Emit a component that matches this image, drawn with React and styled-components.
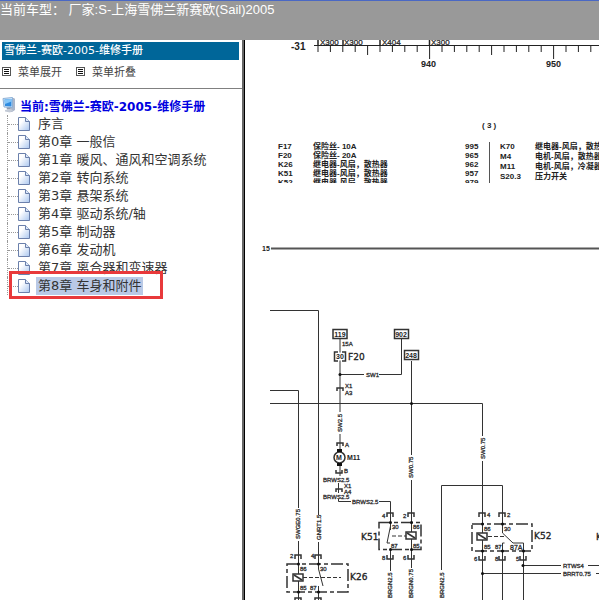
import React from 'react'
import styled, { createGlobalStyle } from 'styled-components';

const chapters = [
    '序言',
    '第0章 一般信',
    '第1章 暖风、通风和空调系统',
    '第2章 转向系统',
    '第3章 悬架系统',
    '第4章 驱动系统/轴',
    '第5章 制动器',
    '第6章 发动机',
    '第7章 离合器和变速器',
    '第8章 车身和附件',
];

const legendLeft = [
    ['F17', '保险丝- 10A', '995'],
    ['F20', '保险丝- 20A', '965'],
    ['K26', '继电器-风扇，散热器', '962'],
    ['K51', '继电器-风扇，散热器', '957'],
    ['K52', '继电器-风扇，散热器', '979'],
];

const legendRight = [
    ['K70', '继电器-风扇，散热器'],
    ['M4', '电机-风扇，散热器'],
    ['M11', '电机-风扇，冷凝器'],
    ['S20.3', '压力开关'],
];

const ListIcon = () => (
    <svg width="9" height="9" viewBox="0 0 9 9" shapeRendering="crispEdges" aria-hidden="true">
        <rect x="0.5" y="0.5" width="8" height="8" fill="#fff" stroke="#555" />
        <path d="M2 2.5h5M2 4.5h5M2 6.5h5" stroke="#111" />
    </svg>
)

const ComputerIcon = () => (
    <svg width="14" height="16" viewBox="0 0 14 16" aria-hidden="true">
        <path d="M9 1h3l1 1v11l-3 2H8z" fill="#aab6ca" />
        <path d="M1 1.500L10.500.5v10L2 10z" fill="#d3e6f8" stroke="#8db0d6" />
        <path d="M2.500 2.500L9.500 2v7.500L3 9z" fill="#2f8be0" />
        <path d="M2.500 2.500L9.500 2v2.500L3 7z" fill="#85c6f8" />
        <path d="M4.500 10.500h4v2H5z" fill="#8f9bb0" />
        <path d="M3 13l6-1 2 1.500-3 2-5-1z" fill="#c3cad6" />
    </svg>
)

const PageIcon = () => (
    <svg width="12" height="14" viewBox="0 0 12 14" aria-hidden="true">
        <defs>
            <linearGradient id="sheet" x1="0" y1="0" x2="1" y2="1">
                <stop offset="0.3" stopColor="#fff" />
                <stop offset="1" stopColor="#a9c6ef" />
            </linearGradient>
        </defs>
        <path d="M.5.5h7l4 4v9H.5z" fill="url(#sheet)" stroke="#6b80ab" />
        <path d="M7.500.5v4h4" fill="#dce8fa" stroke="#6b80ab" />
    </svg>
)

const Ruler = () => {
    const ticks = [];
    for (let i = 0; i < 23; i++) {
        ticks.push(318 + i * 12.4);
    }
    return (
        <Drawing width="354" height="80" viewBox="245 40 354 80" aria-label="-31">
            <path d="M314 45.500H599" stroke="#222" />
            {ticks.map((x, i) => (
                <path key={x} d={`M${x} 45v${i % 10 === 9 ? 14 : i % 5 === 4 ? 10 : 7}`} stroke="#222" />
            ))}
            <path d="M318 40v6M343 40v6M380 40v6M429.500 40v6" stroke="#222" strokeWidth="1.500" />
            <text x="291" y="50" fontSize="10">-31</text>
            <Wire fontSize="8">
                <text x="320" y="45">X300</text>
                <text x="344" y="45">X300</text>
                <text x="382" y="45">X404</text>
                <text x="431" y="45">X300</text>
            </Wire>
            <text x="421" y="67" fontSize="9">940</text>
            <text x="546" y="67" fontSize="9">950</text>
        </Drawing>
    )
}

const Coil = ({ x, y }) => (
    <g strokeWidth="1.500">
        <rect x={x - 5} y={y - 3} width="10" height="7" fill="#fff" />
        <path d={`M${x - 4} ${y - 2}l8 5`} />
    </g>
)

const Circuit = () => (
    <Drawing width="354" height="370" viewBox="245 230 354 370" aria-label="F20 M11 K26 K51 K52">
        <g fill="none" stroke="#333" strokeWidth="1">
            <path d="M271 248.500H599" strokeWidth="2" stroke="#555" />
            <path d="M270 310.500H318.500V515M318.500 542V569M318.500 586V600" />
            <path d="M270 390.500H298.500V508M298.500 541V600" />
            <path d="M270 403.500H482.500V436M482.500 461V600" />
            <path d="M340 339V412M340 434V476M401.500 339V374.500H379M340 374.500H364" />
            <path d="M411.500 361V455M411.500 480V566" />
            <path d="M338.500 483v10M338.500 499v2.500H351M379 501.500H390.500V530" />
            <path d="M390.500 526L387 543M387 543h3M390.500 549V571M411.500 550V568" />
            <path d="M441.500 570V485.500H502.500V533L513 543H523.500V600M502.500 543h2M502.500 543V600" />
            <path d="M523 565.500H561M588 565.500H599M482 573.500H561M596 573.500H599" />
            <path d="M318.500 569L323 586" />
            <path d="M337 391v-3h6v3M337 446v-3h6v3M336 470v3h6v-3M336 492v-3h6v3" strokeWidth="1.500" />
            <path d="M387 517v-4h6v4M408 517v-4h6v4M387 555v4h6v-4M408 555v4h6v-4" strokeWidth="1.500" />
            <path d="M295 559v-4h6v4M315 559v-4h6v4M295 600v-2h6v2M315 600v-2h6v2" strokeWidth="1.500" />
            <path d="M479 517v-4h6v4M499 517v-4h6v4M479 556v4h6v-4M499 556v4h6v-4M520 556v4h6v-4" strokeWidth="1.500" />
            <g strokeDasharray="12 3 4 3" strokeWidth="1.500">
                <rect x="379" y="522.500" width="42" height="27" />
                <rect x="287" y="564" width="61" height="28" />
                <rect x="472" y="524" width="60" height="27" />
            </g>
            <path d="M392 536h14M303 577.500h38M488 536.500h17" strokeDasharray="4 2" />
            <g fill="#fff" strokeWidth="1.500">
                <rect x="333" y="329.500" width="14" height="9" />
                <rect x="394.500" y="329.500" width="14" height="9" />
                <rect x="404.500" y="350.500" width="14" height="9" />
            </g>
            <path d="M334 352.500h11v8h-11z" fill="#fff" stroke="none" />
            <path d="M338 352h-3.500v9h3.500M342 352h3.500v9h-3.500" strokeWidth="1.500" />
            <Coil x={298} y={577} />
            <Coil x={411} y={535} />
            <Coil x={482} y={536} />
            <circle cx="339.500" cy="457.500" r="5.500" fill="#fff" strokeWidth="1.500" />
        </g>
        <g fill="#111">
            <rect x="337" y="449" width="5" height="3" />
            <rect x="337" y="463" width="5" height="3" />
            <circle cx="340" cy="374.500" r="1.500" />
            <circle cx="411.500" cy="403.500" r="1.500" />
            <circle cx="523" cy="565.500" r="1.500" />
            <circle cx="482.500" cy="573.500" r="1.500" />
            <circle cx="390.500" cy="522.500" r="1.500" />
            <circle cx="411.500" cy="522.500" r="1.500" />
            <circle cx="390.500" cy="549.500" r="1.500" />
            <circle cx="411.500" cy="549.500" r="1.500" />
            <circle cx="298.500" cy="564" r="1.500" />
            <circle cx="318.500" cy="564" r="1.500" />
            <circle cx="298.500" cy="592" r="1.500" />
            <circle cx="318.500" cy="592" r="1.500" />
            <circle cx="482.500" cy="524" r="1.500" />
            <circle cx="502.500" cy="524" r="1.500" />
            <circle cx="482.500" cy="551" r="1.500" />
            <circle cx="502.500" cy="551" r="1.500" />
            <circle cx="523.500" cy="551" r="1.500" />
        </g>
        <text x="262" y="251" fontSize="7">15</text>
        <g fontSize="7" textAnchor="middle">
            <text x="340" y="337">119</text>
            <text x="401" y="337">902</text>
            <text x="411" y="358">248</text>
            <text x="340" y="359">30</text>
            <text x="339" y="460">M</text>
        </g>
        <Device x="348" y="360">F20</Device>
        <text x="347" y="460" fontSize="7">M11</text>
        <Device x="361" y="540">K51</Device>
        <Device x="350" y="580">K26</Device>
        <Device x="534" y="539">K52</Device>
        <Device x="596" y="540">K70</Device>
        <Wire fontSize="6">
            <text x="342" y="346">15A</text>
            <text x="366" y="377">SW1</text>
            <text x="345" y="388">X1</text>
            <text x="345" y="395">A3</text>
            <text x="345" y="447">A</text>
            <text x="344" y="473">B</text>
            <text x="344" y="488">X1</text>
            <text x="344" y="494">A4</text>
            <text x="323" y="482">BRWS2.5</text>
            <text x="323" y="499">BRWS2.5</text>
            <text x="352" y="504">BRWS2.5</text>
            <text x="563" y="568">RTWS4</text>
            <text x="563" y="576">BRRT0.75</text>
            <text x="382" y="518">4</text>
            <text x="403" y="518">2</text>
            <text x="392" y="529">30</text>
            <text x="413" y="529">86</text>
            <text x="391" y="548">87</text>
            <text x="413" y="548">85</text>
            <text x="382" y="560">8</text>
            <text x="403" y="560">6</text>
            <text x="290" y="558">2</text>
            <text x="311" y="558">4</text>
            <text x="300" y="571">86</text>
            <text x="320" y="571">30</text>
            <text x="300" y="590">85</text>
            <text x="310" y="590">87</text>
            <text x="487" y="517">4</text>
            <text x="507" y="517">2</text>
            <text x="484" y="531">86</text>
            <text x="504" y="531">30</text>
            <text x="484" y="549">85</text>
            <text x="495" y="549">87</text>
            <text x="510" y="550" fontSize="7">87A</text>
            <text x="474" y="561">6</text>
            <text x="495" y="561">8</text>
            <text x="516" y="561">5</text>
        </Wire>
        <Wire fontSize="6">
            <text transform="translate(342 432) rotate(-90)">SW2.5</text>
            <text transform="translate(413 478) rotate(-90)">SW0.75</text>
            <text transform="translate(485 459) rotate(-90)">SW0.75</text>
            <text transform="translate(300 539) rotate(-90)">SWGE0.75</text>
            <text transform="translate(321 540) rotate(-90)">GNRT1.5</text>
            <text transform="translate(392 598) rotate(-90)">BRGN2.5</text>
            <text transform="translate(413 598) rotate(-90)">BRGN0.75</text>
            <text transform="translate(444 598) rotate(-90)">BRGN2.5</text>
        </Wire>
    </Drawing>
)

const App = () => {
    return (
        <Page>
            <GlobalStyle />
            <TopBar>当前车型： 厂家:S-上海雪佛兰新赛欧(Sail)2005</TopBar>
            <Body>
                <Sidebar>
                    <BookTitle>雪佛兰-赛欧-2005-维修手册</BookTitle>
                    <Tools>
                        <ToolButton type="button"><ListIcon />菜单展开</ToolButton>
                        <ToolButton type="button"><ListIcon />菜单折叠</ToolButton>
                    </Tools>
                    <Tree>
                        <Root href="#root"><ComputerIcon />当前:雪佛兰-赛欧-2005-维修手册</Root>
                        <Branch>
                            {chapters.map((name, i) => (
                                <Leaf key={name}>
                                    <PageIcon />
                                    <LeafLink href={`#chapter${i}`} $selected={i === 9}>{name}</LeafLink>
                                    {i === 9 && <Marker />}
                                </Leaf>
                            ))}
                        </Branch>
                    </Tree>
                </Sidebar>
                <Sheet>
                    <Ruler />
                    <SheetNumber>( 3 )</SheetNumber>
                    <Legend>
                        <LegendTable>
                            <tbody>
                                {legendLeft.map(row => (
                                    <tr key={row[0]}>
                                        <Cell $width={35}>{row[0]}</Cell>
                                        <Cell $width={152}>{row[1]}</Cell>
                                        <Cell $width={24}>{row[2]}</Cell>
                                    </tr>
                                ))}
                            </tbody>
                        </LegendTable>
                        <Divider />
                        <LegendTable $loose>
                            <tbody>
                                {legendRight.map(row => (
                                    <tr key={row[0]}>
                                        <Cell $width={35}>{row[0]}</Cell>
                                        <Cell $width={90}>{row[1]}</Cell>
                                    </tr>
                                ))}
                            </tbody>
                        </LegendTable>
                    </Legend>
                    <Circuit />
                </Sheet>
            </Body>
        </Page>
    )
}

const GlobalStyle = createGlobalStyle`
    * {
        box-sizing: border-box;
    }
    body {
        margin: 0;
        background: #fff;
        overflow: hidden;
    }
`;
const Page = styled.div`
    display: flex;
    flex-direction: column;
    min-height: 100vh;
    font-family: "DejaVu Sans", "Noto Sans CJK SC", sans-serif;
`;
const TopBar = styled.header`
    height: 40px;
    border-top: 1px solid #4a68c4;
    background: #999;
    color: #fff;
    font: 13px/17px "Liberation Sans", "Noto Sans CJK SC", sans-serif;
    white-space: nowrap;
`;
const Body = styled.div`
    display: flex;
    flex: 1;
`;
const Sidebar = styled.nav`
    flex: 0 0 244px;
    padding-top: 2px;
    border-right: 2px solid #666;
`;
const BookTitle = styled.h1`
    margin: 0 3px 0 2px;
    padding-left: 2px;
    background: #069;
    color: #fff;
    font-size: 11px;
    font-weight: 500;
    line-height: 18px;
`;
const Tools = styled.div`
    display: flex;
    gap: 14px;
    height: 29px;
    padding: 2px;
    border-bottom: 1px solid #808080;
`;
const ToolButton = styled.button`
    display: flex;
    align-items: center;
    gap: 7px;
    height: 18px;
    padding: 0;
    border: 0;
    background: none;
    color: #444;
    font-family: inherit;
    font-size: 11px;
`;
const Tree = styled.div`
    padding-top: 7px;
`;
const Root = styled.a`
    display: flex;
    align-items: center;
    gap: 4px;
    height: 18px;
    padding-left: 2px;
    color: #0000e0;
    font-size: 12px;
    font-weight: 700;
    text-decoration: none;
    white-space: nowrap;
`;
const Branch = styled.ul`
    margin: 0 0 0 7px;
    padding: 1px 0 0;
    list-style: none;
`;
const Leaf = styled.li`
    position: relative;
    display: flex;
    align-items: center;
    height: 18px;
    border-left: 1px dotted #999;

    &::before {
        content: '';
        width: 10px;
        border-top: 1px dotted #999;
    }
`;
const LeafLink = styled.a`
    margin-left: 6px;
    padding: 0 2px;
    background: ${props => props.$selected ? '#b9c9e6' : 'none'};
    color: #333;
    font-size: 13px;
    line-height: 18px;
    text-decoration: none;
    white-space: nowrap;
`;
const Marker = styled.span`
    position: absolute;
    left: 1px;
    top: -6px;
    width: 154px;
    height: 28px;
    border: 3px solid #e8393b;
    pointer-events: none;
`;
const Sheet = styled.main`
    display: flex;
    flex: 1;
    flex-direction: column;
    min-width: 0;
    overflow: hidden;
    border-left: 1px solid #000;
    background: #fff;
`;
const Drawing = styled.svg`
    display: block;
    flex: none;
    font-family: "Liberation Sans", Arial, sans-serif;
    font-weight: 700;
    fill: #222;
`;
const Wire = styled.g`
    font-weight: 400;
    stroke: #333;
    stroke-width: 0.3px;
`;
const Device = styled.text`
    font-family: "DejaVu Sans", sans-serif;
    font-size: 9px;
    font-weight: 400;
    stroke: #222;
    stroke-width: 0.3px;
`;
const SheetNumber = styled.div`
    height: 21px;
    padding-left: 237px;
    color: #222;
    font: 700 8px/12px "Liberation Sans", sans-serif;
`;
const Legend = styled.div`
    display: flex;
    height: 42px;
    margin-bottom: 47px;
    padding: 1px 0 0 33px;
    overflow: hidden;
`;
const Divider = styled.div`
    flex: none;
    width: 1px;
    margin-right: 10px;
    background: #555;
`;
const LegendTable = styled.table`
    flex: none;
    align-self: flex-start;
    border-collapse: collapse;
    color: #222;
    font-family: "Liberation Sans", "Noto Sans CJK SC", sans-serif;
    font-size: 8px;
    font-weight: 700;
    line-height: ${props => props.$loose ? 10 : 9}px;
    white-space: nowrap;
`;
const Cell = styled.td`
    min-width: ${props => props.$width}px;
    padding: 0;
`;
export default App;
